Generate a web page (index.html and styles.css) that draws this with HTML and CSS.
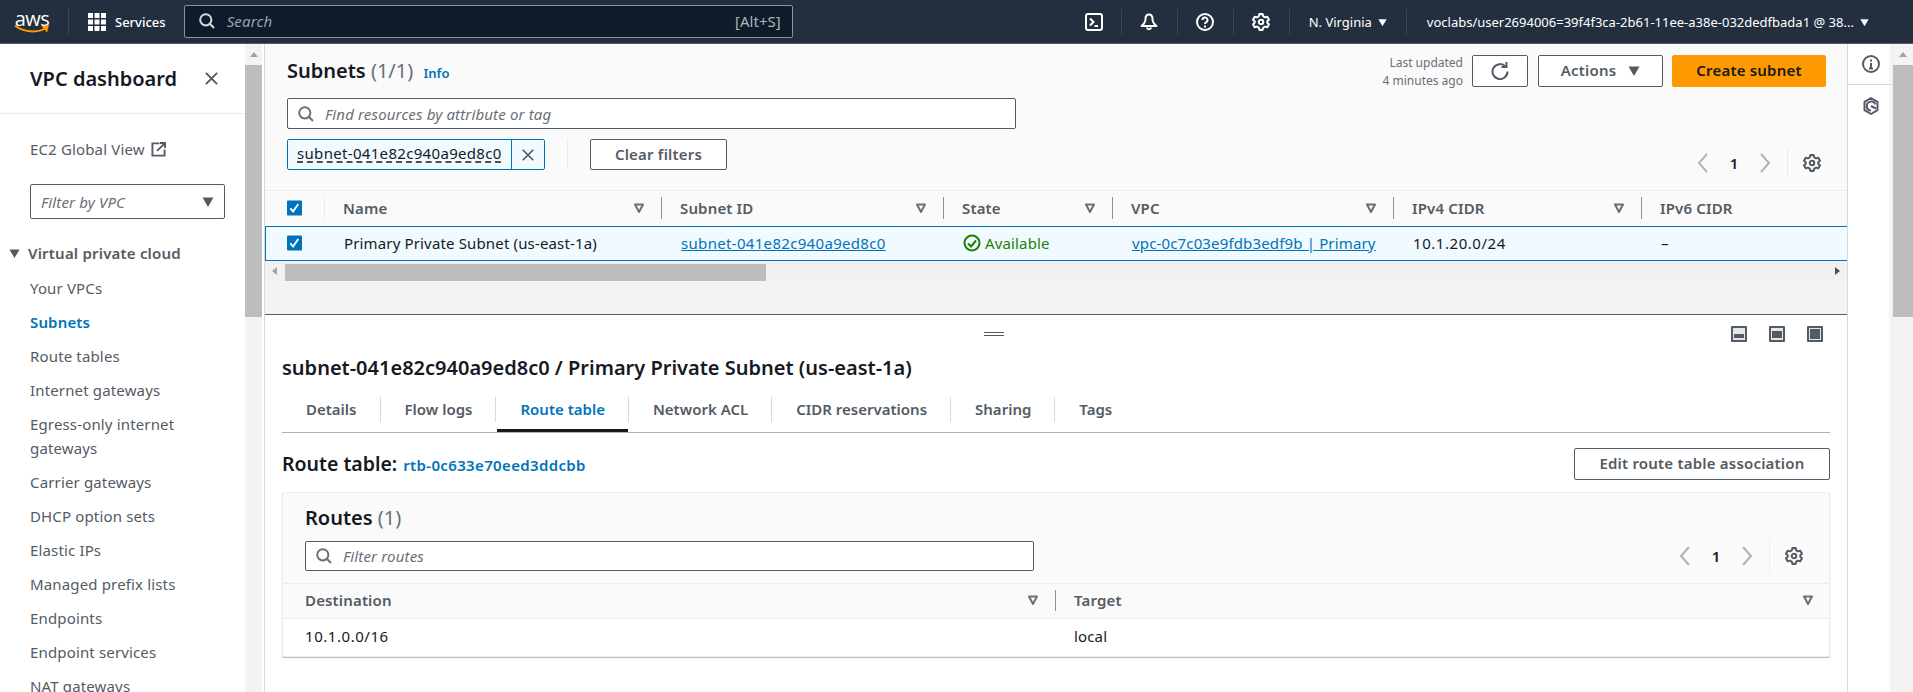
FILE: index.html
```html
<!DOCTYPE html>
<html lang="en">
<head>
<meta charset="UTF-8">
<meta name="viewport" content="width=device-width, initial-scale=1.0">
<title>Subnets | VPC Console</title>
<link rel="stylesheet" href="styles.css">
</head>
<body>

<svg class="defs" aria-hidden="true">
    <symbol id="icSearch" viewBox="0 0 16 16"><circle cx="6.8" cy="6.8" r="5.6" fill="none" stroke="currentColor" stroke-width="2"/><path d="M10.8 10.8L15 15" fill="none" stroke="currentColor" stroke-width="2"/></symbol>
    <symbol id="icGear" viewBox="0 0 16 16"><path d="M6.5 1h3l.5 2 1.6.9 2-.6 1.5 2.6-1.5 1.4v1.4l1.5 1.4-1.5 2.6-2-.6-1.6.9-.5 2h-3l-.5-2-1.6-.9-2 .6-1.5-2.6 1.5-1.4V7.3L.9 5.9l1.5-2.6 2 .6L6 3z" fill="none" stroke="currentColor" stroke-width="1.8" stroke-linejoin="round"/><circle cx="8" cy="8" r="2" fill="none" stroke="currentColor" stroke-width="1.8"/></symbol>
    <symbol id="icSort" viewBox="0 0 12 12"><path d="M2 2.5h8L6 10z" fill="none" stroke="currentColor" stroke-width="2" stroke-linejoin="round"/></symbol>
    <symbol id="icCaret" viewBox="0 0 12 12"><path d="M.5 1.5h11L6 11z" fill="currentColor"/></symbol>
    <symbol id="icPrev" viewBox="0 0 12 20"><path d="M10 1L2 10l8 9" fill="none" stroke="currentColor" stroke-width="2"/></symbol>
    <symbol id="icNext" viewBox="0 0 12 20"><path d="M2 1l8 9-8 9" fill="none" stroke="currentColor" stroke-width="2"/></symbol>
    <symbol id="icClose" viewBox="0 0 16 16"><path d="M2 2l12 12M14 2L2 14" fill="none" stroke="currentColor" stroke-width="2"/></symbol>
    <symbol id="icCheck" viewBox="0 0 16 16"><rect width="16" height="16" rx="1" fill="#0073bb"/><path d="M3.5 8.5l3 3.2 5.5-8" fill="none" stroke="#fff" stroke-width="2"/></symbol>
</svg>

<div id="topBar">
    <div class="awsLogo">
        <span class="awsWord">aws</span>
        <svg class="awsSmile" width="36" height="10" viewBox="0 0 36 10"><path d="M1 1.5C9 8 23 9.5 32 4" fill="none" stroke="#ff9900" stroke-width="2"/><path d="M27.5 2.2L35 1.2 33 8.5z" fill="#ff9900"/></svg>
    </div>
    <span class="topDivider logoDivider"></span>
    <svg class="gridIcon" width="18" height="18" viewBox="0 0 18 18" fill="#fff">
        <rect width="5" height="5"/><rect x="6.5" width="5" height="5"/><rect x="13" width="5" height="5"/>
        <rect y="6.5" width="5" height="5"/><rect x="6.5" y="6.5" width="5" height="5"/><rect x="13" y="6.5" width="5" height="5"/>
        <rect y="13" width="5" height="5"/><rect x="6.5" y="13" width="5" height="5"/><rect x="13" y="13" width="5" height="5"/>
    </svg>
    <span class="servicesLabel">Services</span>
    <div class="topSearch">
        <svg class="icon16"><use href="#icSearch"/></svg>
        <span class="topSearchText">Search</span>
        <span class="topShortcut">[Alt+S]</span>
    </div>
    <div class="topIcons">
        <span class="topIconCell">
            <svg width="18" height="18" viewBox="0 0 18 18" fill="none" stroke="#fff" stroke-width="2"><rect x="1" y="1" width="16" height="16" rx="2"/><path d="M5 5.5L8.5 9 5 12.5M9.5 13H13"/></svg>
        </span>
        <span class="topDivider"></span>
        <span class="topIconCell">
            <svg width="18" height="18" viewBox="0 0 18 18" fill="none" stroke="#fff" stroke-width="2"><path d="M9 1.500C6.500 1.500 5.500 3.500 5.500 6c0 3-1.500 5-4 7h15c-2.500-2-4-4-4-7 0-2.500-1-4.500-3.500-4.500z" stroke-linejoin="round"/><path d="M6.800 14.500a2.300 2.300 0 0 0 4.400 0"/></svg>
        </span>
        <span class="topDivider"></span>
        <span class="topIconCell">
            <svg width="18" height="18" viewBox="0 0 18 18" fill="none" stroke="#fff" stroke-width="2"><circle cx="9" cy="9" r="8"/><path d="M6.500 7a2.500 2.500 0 1 1 3.500 2.300c-.7.4-1 .8-1 1.700"/><path d="M9 12.500v2"/></svg>
        </span>
        <span class="topDivider"></span>
        <span class="topIconCell">
            <svg class="icon18"><use href="#icGear"/></svg>
        </span>
        <span class="topDivider"></span>
    </div>
    <span class="regionLabel">N. Virginia</span>
    <svg class="topCaret"><use href="#icCaret"/></svg>
    <span class="topDivider"></span>
    <span class="userLabel">voclabs/user2694006=39f4f3ca-2b61-11ee-a38e-032dedfbada1 @ 38...</span>
    <svg class="topCaret"><use href="#icCaret"/></svg>
</div>

<div id="pageBody">
    <div id="sideNav">
        <div class="navHeader">
            <span class="navTitle">VPC dashboard</span>
            <svg class="navClose"><use href="#icClose"/></svg>
        </div>
        <div class="navGlobal">
            <span>EC2 Global View</span>
            <svg width="15" height="15" viewBox="0 0 16 16" fill="none" stroke="#545b64" stroke-width="2"><path d="M9 1.500H1.500v13h13V8"/><path d="M6.500 9.500L14.500 1.500M9.500 1h5.500v5.500"/></svg>
        </div>
        <div class="navSelect">
            <span>Filter by VPC</span>
            <svg class="selectCaret"><use href="#icCaret"/></svg>
        </div>
        <div class="navSection">
            <svg class="navCaret"><use href="#icCaret"/></svg>
            <span>Virtual private cloud</span>
        </div>
        <ul class="navList">
            <li>Your VPCs</li>
            <li class="navActive">Subnets</li>
            <li>Route tables</li>
            <li>Internet gateways</li>
            <li>Egress-only internet gateways</li>
            <li>Carrier gateways</li>
            <li>DHCP option sets</li>
            <li>Elastic IPs</li>
            <li>Managed prefix lists</li>
            <li>Endpoints</li>
            <li>Endpoint services</li>
            <li>NAT gateways</li>
        </ul>
    </div>
    <div class="vScroll navScroll">
        <span class="scrollUp"></span>
        <span class="scrollThumb"></span>
    </div>

    <div id="mainArea">
        <div id="listPanel">
            <div class="listHeader">
                <h1 class="pageTitle">Subnets <span class="countText">(1/1)</span> <a class="infoLink">Info</a></h1>
                <div class="lastUpdated">Last updated<br>4 minutes ago</div>
                <button class="btn btnRefresh">
                    <svg width="18" height="18" viewBox="0 0 18 18" fill="none" stroke="#545b64" stroke-width="2"><path d="M14.500 4.500A7.500 7.500 0 1 0 16.500 9.500"/><path d="M10.500 5h5V0"/></svg>
                </button>
                <button class="btn btnActions">Actions <svg class="btnCaret"><use href="#icCaret"/></svg></button>
                <button class="btn btnPrimary">Create subnet</button>
            </div>
            <div class="filterRow">
                <div class="filterLeft">
                    <div class="searchBox listSearch">
                        <svg class="icon16"><use href="#icSearch"/></svg>
                        <span>Find resources by attribute or tag</span>
                    </div>
                    <div class="tokenRow">
                        <div class="token">
                            <span class="tokenText">subnet-041e82c940a9ed8c0</span>
                            <span class="tokenClose"><svg class="icon14"><use href="#icClose"/></svg></span>
                        </div>
                        <span class="tokenDivider"></span>
                        <button class="btn btnClear">Clear filters</button>
                    </div>
                </div>
                <div class="pager listPager">
                    <svg class="pagerArrow"><use href="#icPrev"/></svg>
                    <span class="pagerNum">1</span>
                    <svg class="pagerArrow"><use href="#icNext"/></svg>
                    <span class="pagerDivider"></span>
                    <svg class="icon18 pagerGear"><use href="#icGear"/></svg>
                </div>
            </div>

            <div class="subnetTable">
                <div class="tableRow headRow">
                    <div class="cell checkCell"><svg class="checkIcon"><use href="#icCheck"/></svg></div>
                    <div class="cell headCell softLine">Name<svg class="sortIcon"><use href="#icSort"/></svg></div>
                    <div class="cell headCell">Subnet ID<svg class="sortIcon"><use href="#icSort"/></svg></div>
                    <div class="cell headCell">State<svg class="sortIcon"><use href="#icSort"/></svg></div>
                    <div class="cell headCell">VPC<svg class="sortIcon"><use href="#icSort"/></svg></div>
                    <div class="cell headCell">IPv4 CIDR<svg class="sortIcon"><use href="#icSort"/></svg></div>
                    <div class="cell headCell">IPv6 CIDR</div>
                </div>
                <div class="tableRow bodyRow">
                    <div class="cell checkCell"><svg class="checkIcon"><use href="#icCheck"/></svg></div>
                    <div class="cell">Primary Private Subnet (us-east-1a)</div>
                    <div class="cell"><a class="tableLink idText">subnet-041e82c940a9ed8c0</a></div>
                    <div class="cell stateOk">
                        <svg width="18" height="18" viewBox="0 0 18 18" fill="none" stroke="#1d8102" stroke-width="2"><circle cx="9" cy="9" r="7.500"/><path d="M5 9.500l3 3 5-6"/></svg>
                        Available
                    </div>
                    <div class="cell"><a class="tableLink">vpc-0c7c03e9fdb3edf9b | Primary</a></div>
                    <div class="cell cidrText">10.1.20.0/24</div>
                    <div class="cell">–</div>
                </div>
            </div>
            <div class="hScroll">
                <span class="hArrowLeft"></span>
                <span class="hThumb"></span>
                <span class="hArrowRight"></span>
            </div>
            <div class="listFiller"></div>
        </div>

        <div id="splitPanel">
            <div class="splitTop">
                <span class="splitHandle"></span>
                <div class="splitIcons">
                    <svg class="splitIcon" viewBox="0 0 16 16"><rect width="16" height="16" rx="1" fill="#545b64"/><rect x="2" y="2" width="12" height="12" fill="#e4e7e8"/><rect x="3" y="8" width="10" height="4" fill="#545b64"/></svg>
                    <svg class="splitIcon" viewBox="0 0 16 16"><rect width="16" height="16" rx="1" fill="#545b64"/><rect x="2" y="2" width="12" height="12" fill="#e4e7e8"/><rect x="3" y="5" width="10" height="7" fill="#545b64"/></svg>
                    <svg class="splitIcon" viewBox="0 0 16 16"><rect width="16" height="16" rx="1" fill="#545b64"/><rect x="2" y="2" width="12" height="12" fill="#e4e7e8"/><rect x="3" y="3" width="10" height="10" fill="#545b64"/></svg>
                </div>
            </div>
            <h2 class="detailTitle">subnet-041e82c940a9ed8c0 / Primary Private Subnet (us-east-1a)</h2>
            <div class="tabBar">
                <span class="tab">Details</span>
                <span class="tab">Flow logs</span>
                <span class="tab tabActive">Route table</span>
                <span class="tab">Network ACL</span>
                <span class="tab">CIDR reservations</span>
                <span class="tab">Sharing</span>
                <span class="tab">Tags</span>
            </div>
            <div class="routeHeader">
                <span class="routeLabel">Route table:</span>
                <a class="routeLink">rtb-0c633e70eed3ddcbb</a>
                <button class="btn btnEdit">Edit route table association</button>
            </div>
            <div class="routeCard">
                <div class="cardHeader">
                    <div class="cardTitle">Routes <span class="countText">(1)</span></div>
                    <div class="cardTools">
                        <div class="searchBox cardSearch">
                            <svg class="icon16"><use href="#icSearch"/></svg>
                            <span>Filter routes</span>
                        </div>
                        <div class="pager cardPager">
                            <svg class="pagerArrow"><use href="#icPrev"/></svg>
                            <span class="pagerNum">1</span>
                            <svg class="pagerArrow"><use href="#icNext"/></svg>
                            <span class="pagerDivider"></span>
                            <svg class="icon18 pagerGear"><use href="#icGear"/></svg>
                        </div>
                    </div>
                </div>
                <div class="routeRow routeHead">
                    <div class="routeCell">Destination<svg class="sortIcon"><use href="#icSort"/></svg></div>
                    <div class="routeCell routeTarget">Target<svg class="sortIcon targetSort"><use href="#icSort"/></svg></div>
                </div>
                <div class="routeRow routeBody">
                    <div class="routeCell cidrText">10.1.0.0/16</div>
                    <div class="routeCell routeTargetBody">local</div>
                </div>
            </div>
        </div>
    </div>

    <div id="toolsRail">
        <div class="toolCell toolInfo">
            <svg width="18" height="18" viewBox="0 0 18 18" fill="none" stroke="#545b64" stroke-width="2"><circle cx="9" cy="9" r="8"/><path d="M9 8v5.500M7 13.500h4M9 4.500v2"/></svg>
        </div>
        <div class="toolCell">
            <svg width="16" height="18" viewBox="0 0 16 18" fill="none" stroke="#545b64" stroke-width="2"><path d="M8 1l6.500 3.800v8.400L8 17l-6.500-3.800V4.800z" stroke-linejoin="round"/><path d="M12.500 7.500A4.500 4.500 0 1 0 8 13.500M8 9l5 2.500"/></svg>
        </div>
    </div>
    <div class="vScroll pageScroll">
        <span class="scrollUp"></span>
        <span class="scrollThumb"></span>
    </div>
</div>

</body>
</html>
```

FILE: styles.css
```css
* {
    box-sizing: border-box;
}

html, body {
    height: 100%;
}

body {
    margin: 0;
    font-family: 'Noto Sans', 'Open Sans', Arial, sans-serif;
    font-size: 15px;
    letter-spacing: 0.15px;
    line-height: 20px;
    color: #16191f;
    background-color: #fff;
    overflow: hidden;
    display: flex;
    flex-direction: column;
}

.defs {
    display: none;
}

.icon14 {
    width: 14px;
    height: 14px;
    display: block;
}

.icon16 {
    width: 16px;
    height: 16px;
    flex: none;
}

.icon18 {
    width: 18px;
    height: 18px;
}

/* top bar */

#topBar {
    height: 44px;
    flex: none;
    display: flex;
    align-items: center;
    background-color: #232f3e;
    border-bottom: 1px solid #545b64;
    color: #fff;
    letter-spacing: 0;
}

.awsLogo {
    width: 36px;
    height: 24px;
    margin-left: 14px;
    position: relative;
}

.awsWord {
    display: block;
    font-family: 'Open Sans', sans-serif;
    font-size: 20px;
    line-height: 18px;
    letter-spacing: -0.5px;
    text-align: center;
}

.awsSmile {
    position: absolute;
    left: 0;
    top: 14px;
}

.topDivider {
    width: 1px;
    height: 25px;
    flex: none;
    background-color: #414750;
}

.logoDivider {
    margin-left: 18px;
}

.gridIcon {
    margin-left: 19px;
    flex: none;
}

.servicesLabel {
    margin-left: 9px;
    font-size: 13px;
    font-weight: 500;
}

.topSearch {
    width: 609px;
    height: 33px;
    margin-left: 18px;
    padding: 0 11px 2px 14px;
    display: flex;
    align-items: center;
    background-color: #0f1b2a;
    border: 1px solid #879596;
    border-radius: 2px;
    color: #d5dbdb;
}

.topSearchText {
    margin-left: 12px;
    font-style: italic;
    letter-spacing: 0.15px;
    color: #95a5a6;
}

.topShortcut {
    margin-left: auto;
    font-size: 15px;
    color: #aab7b8;
}

.topIcons {
    margin-left: 274px;
    display: flex;
    align-items: center;
}

.topIconCell {
    width: 55px;
    display: flex;
    justify-content: center;
    color: #fff;
}

.topIcons .topIconCell:first-child {
    width: 54px;
    justify-content: flex-start;
    padding-left: 18px;
}

.regionLabel {
    margin-left: 19px;
    font-size: 13px;
}

.topCaret {
    width: 9px;
    height: 9px;
    margin: 1px 19px 0 6px;
    flex: none;
    color: #fff;
}

.userLabel {
    margin-left: 20px;
    font-size: 13px;
    white-space: nowrap;
}

/* page columns */

#pageBody {
    flex: 1;
    min-height: 0;
    display: flex;
}

#sideNav {
    width: 245px;
    flex: none;
    overflow: hidden;
}

.navHeader {
    height: 70px;
    padding: 0 26px 0 30px;
    display: flex;
    align-items: center;
    justify-content: space-between;
    border-bottom: 1px solid #eaeded;
}

.navTitle {
    font-size: 20px;
    font-weight: 600;
    letter-spacing: 0;
}

.navClose {
    width: 15px;
    height: 15px;
    color: #545b64;
}

.navGlobal {
    margin: 25px 0 0 30px;
    display: flex;
    align-items: center;
    gap: 6px;
    color: #545b64;
}

.navSelect {
    width: 195px;
    height: 35px;
    margin: 25px 0 0 30px;
    padding: 0 10px;
    display: flex;
    align-items: center;
    justify-content: space-between;
    border: 1px solid #545b64;
    border-radius: 2px;
    font-style: italic;
    color: #687078;
}

.selectCaret {
    width: 12px;
    height: 12px;
    color: #545b64;
}

.navSection {
    margin: 24px 0 0 9px;
    display: flex;
    align-items: center;
    gap: 8px;
    font-weight: 600;
    letter-spacing: 0.2px;
    color: #545b64;
}

.navCaret {
    width: 11px;
    height: 11px;
    color: #545b64;
}

.navList {
    list-style: none;
    margin: 8px 0 0;
    padding: 0 20px 0 30px;
    line-height: 24px;
    color: #545b64;
}

.navList li {
    padding: 5px 0;
}

.navActive {
    font-weight: 600;
    color: #0073bb;
}

.vScroll {
    flex: none;
    position: relative;
    background-color: #f3f3f3;
}

.navScroll {
    width: 17px;
    margin-right: 2px;
}

.scrollUp {
    display: block;
    width: 0;
    height: 0;
    margin: 8px auto 0;
    border-left: 4px solid transparent;
    border-right: 4px solid transparent;
    border-bottom: 5px solid #a3a3a3;
}

.scrollThumb {
    display: block;
    height: 252px;
    margin-top: 8px;
    background-color: #bdbdbd;
}

#mainArea {
    flex: 1;
    min-width: 0;
    border-left: 1px solid #d5dbdb;
    border-right: 1px solid #d5dbdb;
    display: flex;
    flex-direction: column;
}

/* subnets list */

#listPanel {
    height: 270px;
    flex: none;
    background-color: #fafafa;
    display: flex;
    flex-direction: column;
}

.listHeader {
    height: 54px;
    padding: 11px 21px 0 22px;
    display: flex;
    align-items: flex-start;
}

.pageTitle {
    margin: 5px auto 0 0;
    font-size: 20px;
    line-height: 22px;
    font-weight: 600;
    letter-spacing: 0;
}

.countText {
    font-weight: 400;
    color: #687078;
}

.infoLink {
    margin-left: 5px;
    font-size: 13px;
    font-weight: 600;
    color: #0073bb;
}

.lastUpdated {
    margin-top: -1px;
    font-size: 12px;
    line-height: 18px;
    letter-spacing: 0;
    text-align: right;
    color: #687078;
}

.btn {
    height: 32px;
    padding: 0 20px 2px;
    display: inline-flex;
    align-items: center;
    justify-content: center;
    background-color: #fff;
    border: 1px solid #545b64;
    border-radius: 2px;
    font-family: inherit;
    font-size: 15px;
    font-weight: 600;
    letter-spacing: 0.2px;
    color: #545b64;
}

.btnRefresh {
    width: 56px;
    margin-left: 9px;
    padding: 0;
}

.btnActions {
    width: 125px;
    margin-left: 10px;
    padding: 0 0 2px;
    gap: 12px;
}

.btnCaret {
    width: 12px;
    height: 12px;
    margin-top: 2px;
    color: #545b64;
}

.btnPrimary {
    width: 154px;
    margin-left: 9px;
    padding: 0 0 2px;
    background-color: #ff9900;
    border-color: #ff9900;
    color: #16191f;
}

.filterRow {
    height: 92px;
    padding: 0 21px 12px 22px;
    display: flex;
    justify-content: space-between;
    align-items: flex-end;
}

.filterLeft {
    align-self: flex-start;
}

.searchBox {
    height: 31px;
    padding: 0 10px;
    display: flex;
    align-items: center;
    gap: 11px;
    background-color: #fff;
    border: 1px solid #545b64;
    border-radius: 2px;
    font-style: italic;
    color: #687078;
}

.searchBox .icon16 {
    color: #687078;
}

.listSearch {
    width: 729px;
}

.tokenRow {
    margin-top: 10px;
    display: flex;
    align-items: center;
}

.token {
    width: 258px;
    height: 31px;
    display: flex;
    background-color: #f1faff;
    border: 1px solid #0073bb;
    border-radius: 2px;
}

.tokenText {
    width: 223px;
    padding: 3px 0 0 9px;
    line-height: 20px;
    white-space: nowrap;
    letter-spacing: 0.32px;
    text-decoration: underline dashed #16191f;
    text-underline-offset: 3px;
}

.tokenClose {
    flex: 1;
    display: flex;
    align-items: center;
    justify-content: center;
    border-left: 1px solid #0073bb;
    color: #545b64;
}

.tokenDivider {
    width: 1px;
    height: 31px;
    margin: 0 22px;
    background-color: #eaeded;
}

.btnClear {
    width: 137px;
    height: 31px;
    padding: 0 0 2px;
}

.pager {
    display: flex;
    align-items: center;
    height: 30px;
}

.listPager {
    margin-right: 5px;
}

.pagerArrow {
    width: 12px;
    height: 20px;
    color: #aab7b8;
}

.pagerNum {
    width: 50px;
    text-align: center;
    font-weight: 600;
}

.pagerDivider {
    width: 1px;
    height: 30px;
    margin: 0 15px 0 16px;
    background-color: #eaeded;
}

.pagerGear {
    color: #545b64;
}

/* table */

.subnetTable {
    border-top: 1px solid #eaeded;
}

.tableRow {
    display: grid;
    grid-template-columns: 59px 337px 282px 169px 281px 248px 1fr;
}

.headRow {
    height: 35px;
    font-weight: 600;
    color: #545b64;
}

.bodyRow {
    height: 35px;
    background-color: #f1faff;
    border-top: 1px solid #0073bb;
    border-bottom: 1px solid #0073bb;
    border-left: 1px solid #0073bb;
}

.cell {
    padding: 0 0 2px 19px;
    display: flex;
    align-items: center;
    position: relative;
    white-space: nowrap;
}

.checkCell {
    padding-left: 22px;
}

.bodyRow .checkCell {
    padding-left: 21px;
}

.checkIcon {
    width: 15px;
    height: 16px;
}

.headCell::before {
    content: '';
    position: absolute;
    left: 0;
    top: 6px;
    bottom: 7px;
    width: 1px;
    background-color: #879596;
}

.headCell.softLine::before {
    background-color: #eaeded;
}

.sortIcon {
    width: 12px;
    height: 12px;
    margin-left: auto;
    margin-right: 16px;
    color: #687078;
}

.tableLink {
    color: #0073bb;
    text-decoration: underline;
}

.idText {
    letter-spacing: 0.32px;
}

.cidrText {
    letter-spacing: 0.55px;
}

.stateOk {
    gap: 4px;
    color: #1d8102;
}

.hScroll {
    height: 20px;
    flex: none;
    padding-top: 3px;
    display: flex;
    align-items: stretch;
    background-color: #f1f1f1;
    position: relative;
}

.hArrowLeft,
.hArrowRight {
    width: 0;
    height: 0;
    position: absolute;
    top: 6px;
    border-top: 4px solid transparent;
    border-bottom: 4px solid transparent;
}

.hArrowLeft {
    left: 7px;
    border-right: 5px solid #a3a3a3;
}

.hArrowRight {
    right: 7px;
    border-left: 5px solid #505050;
}

.hThumb {
    width: 481px;
    margin-left: 20px;
    background-color: #bdbdbd;
}

.listFiller {
    flex: 1;
    background-color: #f2f3f3;
}

/* split panel */

#splitPanel {
    flex: 1;
    background-color: #fff;
    border-top: 1px solid #545b64;
    padding: 0 17px;
}

.splitTop {
    height: 16px;
    margin-top: 11px;
    display: flex;
    align-items: center;
}

.splitHandle {
    width: 20px;
    height: 4px;
    margin-left: 702px;
    border-top: 1px solid #545b64;
    border-bottom: 1px solid #545b64;
}

.splitIcons {
    margin-left: auto;
    margin-right: 7px;
    display: flex;
    gap: 22px;
}

.splitIcon {
    width: 16px;
    height: 16px;
}

.detailTitle {
    margin: 15px 0 0;
    font-size: 20px;
    line-height: 22px;
    font-weight: 600;
    letter-spacing: 0;
}

.tabBar {
    height: 36px;
    margin-top: 18px;
    display: flex;
    border-bottom: 1px solid #aab7b8;
}

.tab {
    height: 25px;
    padding: 0 23px 2px 24px;
    display: flex;
    align-items: center;
    font-weight: 600;
    letter-spacing: 0;
    color: #545b64;
    border-right: 1px solid #d5dbdb;
}

.tab:last-child {
    border-right: none;
}

.tabActive {
    color: #0073bb;
    position: relative;
}

.tabActive::after {
    content: '';
    position: absolute;
    left: 1px;
    right: 0;
    top: 32px;
    height: 3px;
    background-color: #16191f;
}

.routeHeader {
    height: 32px;
    margin-top: 15px;
    display: flex;
    align-items: center;
}

.routeLabel {
    font-size: 19.5px;
    font-weight: 600;
    letter-spacing: 0;
}

.routeLink {
    margin-left: 6px;
    margin-top: 2px;
    font-weight: 600;
    letter-spacing: 0.35px;
    color: #0073bb;
}

.btnEdit {
    width: 256px;
    padding: 0 0 2px;
    margin-left: auto;
}

.routeCard {
    height: 165px;
    margin-top: 12px;
    background-color: #fff;
    border: 1px solid #eaeded;
    box-shadow: 0 1px 1px 0 rgba(0, 28, 36, 0.3);
    border-radius: 2px;
}

.cardHeader {
    height: 91px;
    padding: 0 22px;
    background-color: #fafafa;
    border-bottom: 1px solid #eaeded;
}

.cardTitle {
    padding-top: 14px;
    font-size: 20px;
    line-height: 22px;
    font-weight: 600;
    letter-spacing: 0;
}

.cardTools {
    margin-top: 12px;
    display: flex;
    justify-content: space-between;
}

.cardSearch {
    width: 729px;
    height: 30px;
}

.cardPager {
    margin-right: 4px;
}

.routeRow {
    display: grid;
    grid-template-columns: 772px 1fr;
}

.routeHead {
    height: 35px;
    background-color: #fafafa;
    border-bottom: 1px solid #eaeded;
    font-weight: 600;
    color: #545b64;
}

.routeBody {
    height: 36px;
}

.routeCell {
    padding: 0 0 2px 22px;
    display: flex;
    align-items: center;
    position: relative;
}

.routeTarget {
    padding-left: 19px;
}

.routeTarget::before {
    content: '';
    position: absolute;
    left: 0;
    top: 6px;
    bottom: 7px;
    width: 1px;
    background-color: #879596;
}

.routeTargetBody {
    padding-left: 19px;
}

.targetSort {
    margin-right: 15px;
}

/* right rail */

#toolsRail {
    width: 45px;
    flex: none;
    box-shadow: inset -6px 0 6px -6px rgba(0, 0, 0, 0.15);
}

.toolCell {
    height: 41px;
    display: flex;
    align-items: center;
    justify-content: center;
}

.toolInfo {
    border-bottom: 1px solid #d5dbdb;
}

.pageScroll {
    width: 20px;
}
```
